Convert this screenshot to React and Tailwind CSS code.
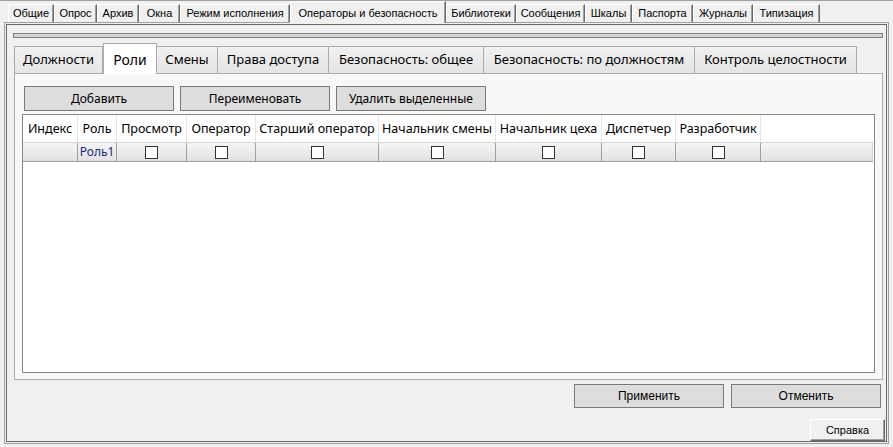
import React from "react";

const topTabs = [
  ["Общие", 46],
  ["Опрос", 43],
  ["Архив", 42],
  ["Окна", 41],
  ["Режим исполнения", 110],
  ["Операторы и безопасность", 156, true],
  ["Библиотеки", 70],
  ["Сообщения", 69],
  ["Шкалы", 47],
  ["Паспорта", 61],
  ["Журналы", 60],
  ["Типизация", 67],
];

const innerTabs = [
  ["Должности", 89],
  ["Роли", 54, true],
  ["Смены", 61],
  ["Права доступа", 111],
  ["Безопасность: общее", 155],
  ["Безопасность: по должностям", 211],
  ["Контроль целостности", 162],
];

const cols = [
  ["Индекс", 55],
  ["Роль", 39],
  ["Просмотр", 70],
  ["Оператор", 69],
  ["Старший оператор", 123],
  ["Начальник смены", 117],
  ["Начальник цеха", 106],
  ["Диспетчер", 74],
  ["Разработчик", 85],
];

function Check() {
  return <div className="w-[13px] h-[13px] bg-white border border-[#333333]" />;
}

export default function App() {
  return (
    <div className="w-[893px] h-[447px] bg-[#f0f0f0] border-t border-[#a0a0a0] flex flex-col overflow-hidden font-['Liberation_Sans',Arial,sans-serif] text-black">
      {/* верхние вкладки */}
      <div className="flex items-end h-[21px] pl-[8px]">
        {topTabs.map(([label, w, active]) => (
          <div
            key={label}
            style={{ width: w }}
            className={
              active
                ? "relative z-10 -mb-px h-[22px] flex items-start justify-center pt-[3px] bg-[#f0f0f0] border-l border-t border-white border-r border-r-[#696969] shadow-[inset_-1px_0_0_#a0a0a0] text-[11px] whitespace-nowrap"
                : "h-[18px] flex items-center justify-center bg-[#f0f0f0] border-l border-t border-white border-r border-r-[#696969] shadow-[inset_-1px_0_0_#a0a0a0] text-[11px] whitespace-nowrap"
            }
          >
            {label}
          </div>
        ))}
      </div>

      {/* панель вкладки */}
      <div className="ml-[4px] w-[885px] h-[422px] border border-[#a0a0a0] p-px">
        <div className="w-full h-full border border-[#696969] flex flex-col">
          <div className="ml-[6px] mt-[8px] w-[870px] h-[5px] border border-[#808080] bg-[#d4d4d4]" />

          {/* внутренние вкладки */}
          <div className="ml-[7px] mt-[5px] h-[30px] flex items-end font-['Noto_Sans','Open_Sans',sans-serif] text-[13px]">
            {innerTabs.map(([label, w, active]) => (
              <div
                key={label}
                style={{ width: w }}
                className={
                  active
                    ? "relative z-10 -mb-px h-[31px] flex items-center justify-center bg-white border border-[#acacac] border-b-0 text-[14px] whitespace-nowrap"
                    : "h-[27px] flex items-center justify-center bg-gradient-to-b from-[#f0f0f0] to-[#e5e5e5] border border-[#acacac] border-l-0 border-b-0 first:border-l whitespace-nowrap"
                }
              >
                {label}
              </div>
            ))}
          </div>

          <div className="ml-[7px] w-[869px] h-[307px] bg-[#f8f8f8] border border-[#acacac] flex flex-col font-['Noto_Sans','Open_Sans',sans-serif]">
            <div className="ml-[9px] mt-[12px] flex gap-[6px]">
              {["Добавить", "Переименовать", "Удалить выделенные"].map((b) => (
                <div
                  key={b}
                  className="w-[150px] h-[25px] flex items-center justify-center bg-[#dddddd] border border-[#7a7a7a] text-[12px]"
                >
                  {b}
                </div>
              ))}
            </div>

            {/* таблица */}
            <div className="ml-[7px] mt-[3px] w-[853px] h-[259px] bg-white border border-[#828790] flex flex-col">
              <div className="flex h-[27px] text-[12.5px]">
                {cols.map(([label, w]) => (
                  <div
                    key={label}
                    style={{ width: w }}
                    className="flex items-center justify-center pt-px border-r border-[#e6e6e6] whitespace-nowrap"
                  >
                    {label}
                  </div>
                ))}
                <div className="flex-1 mr-px" />
              </div>
              <div className="flex h-[20px] mr-px bg-gradient-to-b from-[#f5f5f5] to-[#e1e1e1] border-t border-[#d5d5d5] border-b border-b-[#a0a0a0]">
                {cols.map(([label, w], i) => (
                  <div
                    key={label}
                    style={{ width: w }}
                    className="flex items-center justify-center border-r border-[#a0a0a0]"
                  >
                    {i === 1 ? (
                      <span className="text-[12px] text-[#1c2a84]">Роль1</span>
                    ) : i > 1 ? (
                      <Check />
                    ) : null}
                  </div>
                ))}
                <div className="flex-1 border-r border-[#d0d0d0]" />
              </div>
            </div>
          </div>

          {/* нижние кнопки */}
          <div className="mt-[4px] mr-[5px] flex justify-end gap-[7px]">
            {["Применить", "Отменить"].map((b) => (
              <div
                key={b}
                className="w-[150px] h-[24px] flex items-center justify-center bg-[#dddddd] border border-[#7a7a7a] text-[12px]"
              >
                {b}
              </div>
            ))}
          </div>
          <div className="mt-[11px] mr-px flex justify-end">
            <div className="w-[75px] h-[22px] flex items-center justify-center bg-[#f0f0f0] border-l border-t border-white border-r border-b border-r-[#696969] border-b-[#696969] shadow-[inset_-1px_-1px_0_#a0a0a0] text-[11px]">
              Справка
            </div>
          </div>
        </div>
      </div>
    </div>
  );
}
